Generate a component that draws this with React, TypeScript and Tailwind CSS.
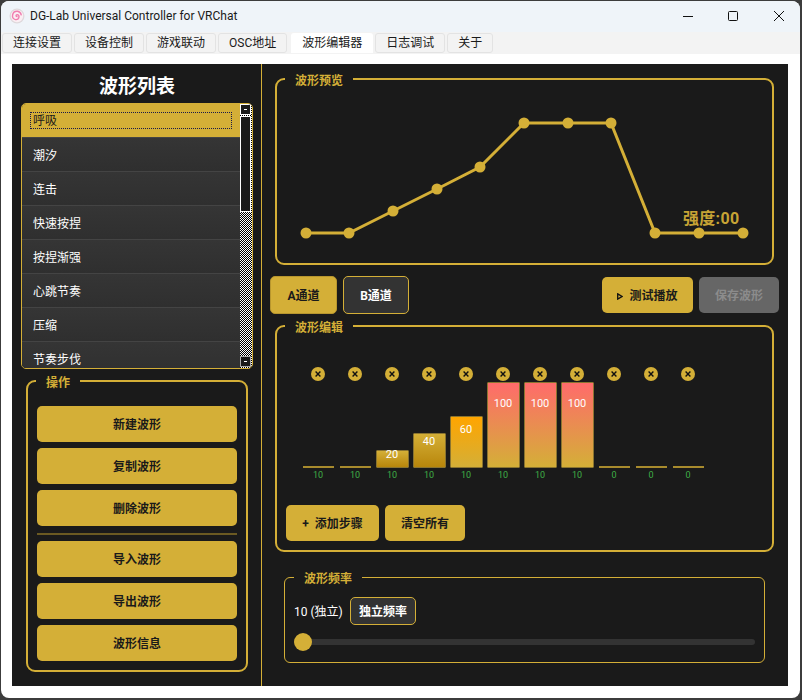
import React from "react";

const GOLD = "#d4af37";
const Btn = ({ c, children }: { c: string; children: React.ReactNode }) => (
  <div className={`flex items-center justify-center rounded-[5px] pt-[2px] text-[12px] font-bold ${c}`}>{children}</div>
);

const ops1 = ["新建波形", "复制波形", "删除波形"];
const ops2 = ["导入波形", "导出波形", "波形信息"];
const items = ["呼吸", "潮汐", "连击", "快速按捏", "按捏渐强", "心跳节奏", "压缩", "节奏步伐"];
const tabs = ["连接设置", "设备控制", "游戏联动", "OSC地址", "波形编辑器", "日志调试", "关于"];
const bars = [
  { h: 0, v: "", n: "10" },
  { h: 0, v: "", n: "10" },
  { h: 18, v: "20", n: "10", bg: "bg-[linear-gradient(#d4af37,#b8860b)]", pt: "pt-0" },
  { h: 35, v: "40", n: "10", bg: "bg-[linear-gradient(#d4af37,#b8860b)]", pt: "pt-[4px]" },
  { h: 52, v: "60", n: "10", bg: "bg-[linear-gradient(#ffa500,#d4af37)]", pt: "pt-[9px]" },
  { h: 86, v: "100", n: "10", bg: "bg-[linear-gradient(#ff6b6b,#d4af37)]", pt: "pt-[17px]" },
  { h: 86, v: "100", n: "10", bg: "bg-[linear-gradient(#ff6b6b,#d4af37)]", pt: "pt-[17px]" },
  { h: 86, v: "100", n: "10", bg: "bg-[linear-gradient(#ff6b6b,#d4af37)]", pt: "pt-[17px]" },
  { h: 0, v: "", n: "0" },
  { h: 0, v: "", n: "0" },
  { h: 0, v: "", n: "0" },
];
const pts: [number, number][] = [
  [29, 144], [72, 144], [116, 122], [160, 100], [203, 78], [247, 34], [291, 34], [334, 34], [378, 144], [422, 144], [466, 144],
];

export default function App() {
  return (
    <div className="h-[700px] w-[802px] overflow-hidden bg-[#3c3c3c] pt-px pr-[2px] pb-[2px] pl-px font-['Roboto','Noto_Sans_CJK_SC',sans-serif]">
      <div className="flex h-full flex-col overflow-hidden rounded-lg bg-white">
        <div className="flex h-[31px] shrink-0 items-center bg-[#eff4f9] pb-[1px]">
          <svg className="ml-[8px] h-[16px] w-[16px]" viewBox="0 0 16 16">
            <circle cx="8" cy="8" r="7.5" fill="#ded9dc" />
            <circle cx="8" cy="8" r="6.2" fill="#fbeef3" />
            <path d="M8 8.6a1 1 0 0 1 .1-2 2.2 2.2 0 0 1 1.9 2.4 3.2 3.2 0 0 1-3.6 2.6A4 4 0 0 1 3.6 7 4.6 4.6 0 0 1 8.6 3.3a4.6 4.6 0 0 1 3.6 3.6" fill="none" stroke="#f07fb0" strokeWidth="1.4" strokeLinecap="round" />
          </svg>
          <span className="ml-[5px] text-[12px] text-[#1a1a1a]">DG-Lab Universal Controller for VRChat</span>
          <div className="ml-auto flex h-full items-center">
            <svg className="mr-[35px] h-[10px] w-[10px]" viewBox="0 0 10 10"><path d="M0 5.5h10" stroke="#111" strokeWidth="1" /></svg>
            <svg className="mr-[36px] h-[10px] w-[10px]" viewBox="0 0 10 10"><rect x=".5" y=".5" width="9" height="9" rx="1" fill="none" stroke="#111" /></svg>
            <svg className="mr-[16px] h-[10px] w-[10px]" viewBox="0 0 10 10"><path d="M0 0l10 10M10 0L0 10" stroke="#111" strokeWidth="1" /></svg>
          </div>
        </div>
        <div className="flex h-[22px] shrink-0 items-end gap-[2px] bg-[#f3f3f3] pb-[1px] pl-[1px]">
          {tabs.map((t) => {
            const on = t === "波形编辑器";
            return (
              <div key={t} className={`flex h-[20px] items-center justify-center rounded-t-[3px] text-[12px] text-[#1a1a1a] ${on ? "ml-[2px] bg-white px-[11px]" : "rounded-[3px] border border-[#e3e3e3] bg-[#f3f3f3] px-[10px]"}`}>
                {t}
              </div>
            );
          })}
        </div>
        <div className="flex min-h-0 flex-1 px-[11px] pt-[10px] pb-[11px]">
          <div className="flex h-[622px] w-[776px] bg-[#1a1a1a]">
            {/* left */}
            <div className="flex w-[250px] shrink-0 flex-col border-r border-[#d4af37] pl-[9px]">
              <div className="mt-[9px] w-[232px] text-center text-[19px] leading-[28px] font-bold text-white">波形列表</div>
              <div className="mt-[2px] flex h-[266px] w-[232px] overflow-hidden rounded-[5px] border border-[#d4af37] bg-[#1a1a1a]">
                <div className="min-w-0 flex-1 overflow-hidden">
                  {items.map((t, i) => (
                    <div key={t} className={`flex h-[34px] shrink-0 items-center border-b border-[#444] pl-[11px] text-[12px] ${i === 0 ? "bg-[#d4af37] text-[#1a1a1a]" : "bg-[linear-gradient(#353535,#2f2f2f)] pt-[2px] text-white"}`}>
                      {i === 0 ? (
                        <div className="-ml-[3px] flex h-[17px] w-[202px] items-center border border-dotted border-[#1a1a4a] pl-[2px]">{t}</div>
                      ) : t}
                    </div>
                  ))}
                </div>
                <div className="flex w-[12px] shrink-0 flex-col bg-[repeating-conic-gradient(#000_0_25%,#fff_0_50%)] bg-[length:2px_2px] pb-[1px]">
                  <div className="flex h-[11px] w-[11px] items-center justify-center border border-white bg-[#1a1a1a]"><div className="h-px w-[3px] bg-white" /></div>
                  <div className="mt-[1px] h-[96px] w-[11px] border border-white bg-[#1a1a1a]" />
                  <div className="mt-auto flex h-[11px] w-[11px] items-center justify-center border border-[#aaa] bg-[#1a1a1a]"><div className="h-px w-[3px] bg-white" /></div>
                </div>
              </div>
              <fieldset className="mt-[2px] ml-[5px] h-[301px] w-[222px] rounded-[9px] border-2 border-[#d4af37] px-[9px]">
                <legend className="-ml-[1px] px-[10px] pt-[4px] text-[12px] leading-[16px] font-bold text-[#d4af37]">操作</legend>
                <div className="mt-[15px] flex flex-col gap-[6px]">
                  {ops1.map((t) => <Btn key={t} c="h-[36px] bg-[#d4af37] text-[#1a1a1a]">{t}</Btn>)}
                  <div className="mt-px h-[2px] bg-[#6b5a22]" />
                  {ops2.map((t) => <Btn key={t} c="h-[36px] bg-[#d4af37] text-[#1a1a1a]">{t}</Btn>)}
                </div>
              </fieldset>
            </div>
            {/* right */}
            <div className="flex min-w-0 flex-1 flex-col pr-[9px] pl-[8px]">
              <fieldset className="mt-[5px] ml-[5px] h-[196px] w-[499px] rounded-[9px] border-2 border-[#d4af37]">
                <legend className="ml-[8px] px-[10px] pt-[4px] text-[12px] leading-[16px] font-bold text-[#d4af37]">波形预览</legend>
                <div className="relative h-[174px]">
                  <svg className="h-full w-full" viewBox="0 0 495 174">
                    <polyline points={pts.map((p) => p.join(",")).join(" ")} fill="none" stroke={GOLD} strokeWidth="3" />
                    {pts.map(([x, y]) => <circle key={x} cx={x} cy={y} r="5.5" fill={GOLD} />)}
                  </svg>
                  <div className="absolute top-[119px] left-[406px] text-[16px] leading-[22px] font-bold tracking-[0.3px] text-[#c7a435]">强度:00</div>
                </div>
              </fieldset>
              <div className="mt-[11px] flex h-[38px] w-[509px] items-center">
                <Btn c="h-[38px] w-[67px] border border-[#b8962e] bg-[#d4af37] text-[#1a1a1a]">A通道</Btn>
                <Btn c="ml-[6px] h-[38px] w-[66px] border border-[#d4af37] bg-[#333] text-white">B通道</Btn>
                <Btn c="ml-auto h-[36px] w-[91px] bg-[#d4af37] text-[#1a1a1a]">
                  <svg className="mr-[6px] h-[7px] w-[6px]" viewBox="0 0 6 7"><path d="M.7.9 5 3.5.7 6.1z" fill="#d4af37" stroke="#111" strokeWidth="1.3" /></svg>
                  测试播放
                </Btn>
                <Btn c="ml-[6px] h-[36px] w-[80px] bg-[#666] text-[#8c8c8c]">保存波形</Btn>
              </div>
              <fieldset className="mt-[2px] ml-[5px] h-[236px] w-[499px] rounded-[9px] border-2 border-[#d4af37] px-[9px]">
                <legend className="-ml-[1px] px-[10px] pt-[4px] text-[12px] leading-[16px] font-bold text-[#d4af37]">波形编辑</legend>
                <div className="mt-[31px] flex pl-[13px]">
                  {bars.map((b, i) => (
                    <div key={i} className="flex w-[37px] shrink-0 flex-col items-center">
                      <div className="flex h-[14px] w-[14px] items-center justify-center rounded-full bg-[#d4af37]">
                        <svg className="h-[6px] w-[6px]" viewBox="0 0 6 6"><path d="M.6.6l4.8 4.8M5.4.6.6 5.4" stroke="#111" strokeWidth="1.4" /></svg>
                      </div>
                      <div className="flex h-[87px] w-full items-end justify-center pl-[1px]">
                        {b.h === 0 ? (
                          <div className="h-[2px] w-[31px] bg-[#a88b2d]" />
                        ) : (
                          <div style={{ height: b.h }} className={`w-[33px] rounded-[1px] border border-[#8a7430] text-center text-[11px] leading-[8px] text-white ${b.bg} ${b.pt}`}>{b.v}</div>
                        )}
                      </div>
                      <div className="mt-[1px] pl-[1px] text-[9px] leading-[12px] text-[#3fae46]">{b.n}</div>
                    </div>
                  ))}
                </div>
                <div className="mt-[24px] flex gap-[6px]">
                  <Btn c="h-[36px] w-[93px] bg-[#d4af37] text-[#1a1a1a]"><span className="mr-[6px]">+</span>添加步骤</Btn>
                  <Btn c="h-[36px] w-[80px] bg-[#d4af37] text-[#1a1a1a]">清空所有</Btn>
                </div>
              </fieldset>
              <fieldset className="mt-[15px] ml-[14px] h-[96px] w-[481px] rounded-[6px] border border-[#d4af37] px-[9px]">
                <legend className="px-[10px] pt-[4px] text-[12px] leading-[16px] font-bold text-[#d4af37]">波形频率</legend>
                <div className="mt-[10px] flex items-center gap-[6px]">
                  <span className="w-[50px] pt-[2px] text-[12px] whitespace-nowrap text-white">10 (独立)</span>
                  <Btn c="h-[28px] w-[66px] rounded-[3px] border border-[#d4af37] bg-[#333] text-white">独立频率</Btn>
                </div>
                <div className="relative mt-[14px] h-[6px] rounded-full bg-[#333]">
                  <div className="absolute -top-[6px] left-0 h-[18px] w-[18px] rounded-full bg-[#d4af37]" />
                </div>
              </fieldset>
            </div>
          </div>
        </div>
      </div>
    </div>
  );
}
